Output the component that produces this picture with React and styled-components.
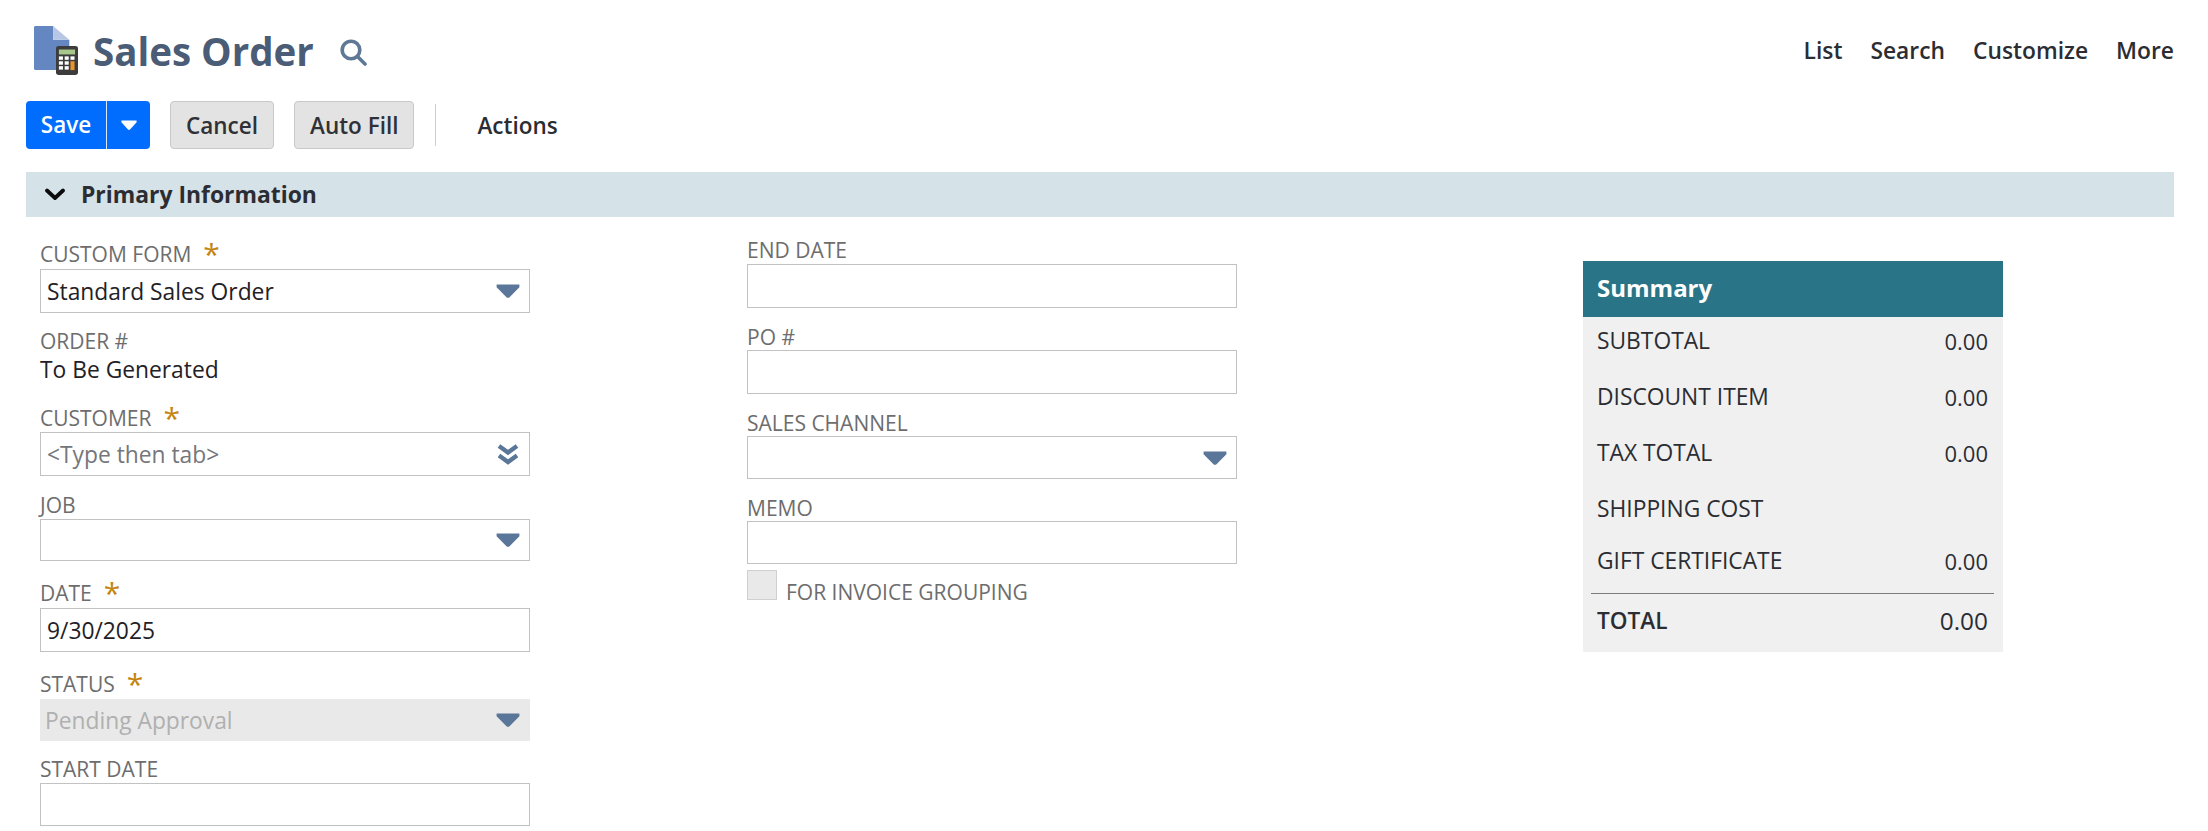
import React from "react";
import styled, { createGlobalStyle } from "styled-components";

const GlobalStyle = createGlobalStyle`
  html, body {
    margin: 0;
    padding: 0;
    background: #fff;
  }
  body {
    font-family: "Open Sans", "Noto Sans", sans-serif;
    color: #1f2126;
  }
`;

const Page = styled.div`
  width: 2208px;
  height: 831px;
  overflow: hidden;
  padding: 0 34px 0 26px;
  box-sizing: border-box;
`;

const TitleRow = styled.div`
  display: flex;
  align-items: center;
  justify-content: space-between;
  height: 101px;
`;

const TitleGroup = styled.div`
  display: flex;
  align-items: center;
  padding: 0 0 0 8px;
  height: 101px;
`;

const Title = styled.h1`
  margin: 0 0 0 15px;
  font-size: 38.5px;
  line-height: 50px;
  font-weight: 700;
  color: #4a5c76;
`;

const SearchButton = styled.span`
  display: flex;
  margin: 4px 0 0 26px;
`;

const TopLinks = styled.nav`
  display: flex;
  gap: 28px;
`;

const TopLink = styled.span`
  font-size: 22.8px;
  line-height: 28px;
  font-weight: 600;
  color: #2b2d33;
`;

const Toolbar = styled.div`
  display: flex;
  align-items: center;
  height: 48px;
`;

const SaveGroup = styled.div`
  display: flex;
  width: 124px;
  height: 48px;
  border-radius: 4px;
  background: #006dff;
  overflow: hidden;
`;

const SaveLabel = styled.span`
  width: 80px;
  text-align: center;
  color: #fff;
  font-size: 22.5px;
  line-height: 48px;
  font-weight: 600;
  border-right: 1px solid #dbe9ff;
`;

const SaveCaret = styled.span`
  flex: 1;
  display: flex;
  align-items: center;
  justify-content: center;
`;

const GreyButton = styled.span`
  height: 48px;
  box-sizing: border-box;
  padding: 0 15px;
  margin-left: 20px;
  display: flex;
  align-items: center;
  background: #e3e3e3;
  border: 1px solid #c9c9c9;
  border-radius: 4px;
  font-size: 22.5px;
  font-weight: 600;
  color: #2f3136;
`;

const Divider = styled.span`
  width: 1px;
  height: 42px;
  margin-left: 21px;
  background: #cfcfcf;
`;

const Actions = styled.span`
  margin-left: 41px;
  font-size: 22.5px;
  font-weight: 600;
  color: #2b2d33;
`;

const SectionBar = styled.div`
  margin-top: 23px;
  height: 45px;
  display: flex;
  align-items: center;
  padding-left: 18px;
  background: #d5e2e8;
`;

const SectionTitle = styled.h2`
  margin: 0 0 0 15px;
  font-size: 22.9px;
  font-weight: 700;
  color: #2b2d33;
`;

const Body = styled.div`
  display: flex;
  align-items: flex-start;
  padding-left: 14px;
`;

const Column = styled.div`
  flex: none;
  width: ${(p) => p.$width}px;
  margin-top: ${(p) => p.$top}px;
  margin-left: ${(p) => p.$left || 0}px;
`;

const Field = styled.div`
  margin-top: ${(p) => p.$top || 0}px;
`;

const Label = styled.div`
  height: 24px;
  margin-bottom: ${(p) => p.$gap || 0}px;
  font-size: 21px;
  line-height: 22px;
  color: #6d6d6d;
  white-space: nowrap;
`;

const Required = styled.span`
  margin-left: 12px;
  font-size: 30px;
  line-height: 22px;
  color: #c4850f;
  vertical-align: -3px;
`;

const Control = styled.div`
  height: ${(p) => p.$height}px;
  box-sizing: border-box;
  display: flex;
  align-items: center;
  justify-content: space-between;
  padding: 0 9px 0 ${(p) => (p.$disabled ? 4 : 6)}px;
  font-size: 22.8px;
  color: ${(p) => (p.$placeholder ? "#75767b" : p.$disabled ? "#b0b0b0" : "#1f2126")};
  background: ${(p) => (p.$disabled ? "#e9e9e9" : "#fff")};
  border: 1px solid ${(p) => (p.$disabled ? "#e9e9e9" : "#c2c2c2")};
`;

const StaticValue = styled.div`
  font-size: 22.8px;
  line-height: 32px;
  color: #1f2126;
`;

const CheckRow = styled.div`
  display: flex;
  align-items: flex-end;
  margin-top: 6px;
`;

const Checkbox = styled.span`
  width: 30px;
  height: 30px;
  box-sizing: border-box;
  background: #e9e9e9;
  border: 1px solid #d0d0d0;
`;

const CheckLabel = styled(Label)`
  margin-left: 9px;
  margin-bottom: -5px;
`;

const Summary = styled.div`
  background: #f0f0f0;
  height: 391px;
`;

const SummaryHeader = styled.div`
  height: 56px;
  box-sizing: border-box;
  display: flex;
  align-items: center;
  padding: 0 0 3px 14px;
  background: #297486;
  color: #fff;
  font-size: 24px;
  font-weight: 700;
`;

const SummaryRow = styled.div`
  height: ${(p) => p.$height}px;
  box-sizing: border-box;
  display: flex;
  justify-content: space-between;
  padding: ${(p) => p.$pad}px 15px 0 14px;
  font-size: 22.8px;
  line-height: 28px;
  color: #2b2d33;
`;

const RowValue = styled.span`
  font-size: ${(p) => (p.$total ? 24.4 : 22)}px;
`;

const TotalLabel = styled.span`
  font-size: 22.6px;
  font-weight: 600;
`;

const SummaryRule = styled.div`
  height: 1px;
  margin: 0 9px 0 8px;
  background: #7b7b7b;
`;

const Caret = ({ color = "#5a7699", width = 24, height = 14 }) => (
  <svg width={width} height={height} viewBox="0 0 20 13" preserveAspectRatio="none">
    <path d="M0.5 0.5h19v2.5l-8 9a2 2 0 0 1-3 0l-8-9z" fill={color} />
  </svg>
);

const DoubleChevron = () => (
  <svg width="24" height="23" viewBox="0 0 24 23" fill="none" stroke="#5a7699" strokeWidth="4.400">
    <path d="M3 3l9 6.500 9-6.500" />
    <path d="M3 12.500l9 6.500 9-6.500" />
  </svg>
);

const SearchIcon = () => (
  <svg width="27" height="27" viewBox="0 0 27 27" fill="none" stroke="#5f7896" strokeWidth="3.600" strokeLinecap="round">
    <circle cx="11" cy="11" r="8.800" />
    <path d="M17.500 17.500l7.500 7.500" />
  </svg>
);

const ChevronDown = () => (
  <svg width="22" height="13" viewBox="0 0 22 13" fill="none" stroke="#0c0c0c" strokeWidth="3.800" strokeLinecap="round" strokeLinejoin="round">
    <path d="M3 2.500l8 7.500 8-7.500" />
  </svg>
);

const RecordIcon = () => (
  <svg width="44" height="49" viewBox="0 0 38 50" preserveAspectRatio="none">
    <path d="M1.500 0h15v14h14v31h-29a1.500 1.500 0 0 1-1.500-1.500v-42a1.500 1.500 0 0 1 1.500-1.500z" fill="#6486c1" />
    <path d="M16.500 0l14 14h-14z" fill="#b6c6e4" />
    <rect x="19" y="20.500" width="19" height="29.500" rx="2.500" fill="#3c3c3c" />
    <rect x="21.500" y="24" width="14" height="5" fill="#a7c88a" />
    <g fill="#fff">
      <rect x="21.500" y="31" width="3.500" height="3.500" />
      <rect x="26.500" y="31" width="3.500" height="3.500" />
      <rect x="21.500" y="36" width="3.500" height="3.500" />
      <rect x="26.500" y="36" width="3.500" height="3.500" />
      <rect x="21.500" y="41" width="3.500" height="3.500" />
      <rect x="26.500" y="41" width="3.500" height="3.500" />
      <rect x="31.500" y="31" width="3.500" height="3.500" />
    </g>
    <rect x="31.500" y="36" width="3.500" height="9" fill="#e8962c" />
  </svg>
);

const leftFields = [
  { label: "CUSTOM FORM", required: true, gap: 2, height: 44, value: "Standard Sales Order", icon: "caret" },
  { label: "CUSTOMER", required: true, top: 21, gap: 1, height: 44, value: "<Type then tab>", placeholder: true, icon: "double" },
  { label: "JOB", top: 18, gap: 1, height: 42, icon: "caret" },
  { label: "DATE", required: true, top: 21, gap: 2, height: 44, value: "9/30/2025" },
  { label: "STATUS", required: true, top: 21, gap: 2, height: 42, value: "Pending Approval", disabled: true, icon: "caret" },
  { label: "START DATE", top: 17, gap: 1, height: 43 },
];

const middleFields = [
  { label: "END DATE", gap: 1, height: 44 },
  { label: "PO #", top: 18, height: 44 },
  { label: "SALES CHANNEL", top: 18, height: 43, icon: "caret" },
  { label: "MEMO", top: 18, height: 43 },
];

const summaryRows = [
  { label: "SUBTOTAL", value: "0.00", height: 56, pad: 10 },
  { label: "DISCOUNT ITEM", value: "0.00", height: 56, pad: 10 },
  { label: "TAX TOTAL", value: "0.00", height: 56, pad: 10 },
  { label: "SHIPPING COST", value: "", height: 56, pad: 10 },
  { label: "GIFT CERTIFICATE", value: "0.00", height: 52, pad: 6 },
];

const FormField = ({ field }) => (
  <Field $top={field.top}>
    <Label $gap={field.gap}>
      {field.label}
      {field.required && <Required>*</Required>}
    </Label>
    <Control $height={field.height} $placeholder={field.placeholder} $disabled={field.disabled}>
      <span>{field.value}</span>
      {field.icon === "caret" && <Caret />}
      {field.icon === "double" && <DoubleChevron />}
    </Control>
  </Field>
);

export default function App() {
  return (
    <Page>
      <GlobalStyle />
      <TitleRow>
        <TitleGroup>
          <RecordIcon />
          <Title>Sales Order</Title>
          <SearchButton>
            <SearchIcon />
          </SearchButton>
        </TitleGroup>
        <TopLinks>
          <TopLink>List</TopLink>
          <TopLink>Search</TopLink>
          <TopLink>Customize</TopLink>
          <TopLink>More</TopLink>
        </TopLinks>
      </TitleRow>

      <Toolbar>
        <SaveGroup>
          <SaveLabel>Save</SaveLabel>
          <SaveCaret>
            <Caret color="#fff" width={16} height={10} />
          </SaveCaret>
        </SaveGroup>
        <GreyButton>Cancel</GreyButton>
        <GreyButton>Auto Fill</GreyButton>
        <Divider />
        <Actions>Actions</Actions>
      </Toolbar>

      <SectionBar>
        <ChevronDown />
        <SectionTitle>Primary Information</SectionTitle>
      </SectionBar>

      <Body>
        <Column $width={490} $top={26}>
          <FormField field={leftFields[0]} />
          <Field $top={17}>
            <Label>ORDER #</Label>
            <StaticValue>To Be Generated</StaticValue>
          </Field>
          {leftFields.slice(1).map((field) => (
            <FormField key={field.label} field={field} />
          ))}
        </Column>

        <Column $width={490} $top={22} $left={217}>
          {middleFields.map((field) => (
            <FormField key={field.label} field={field} />
          ))}
          <CheckRow>
            <Checkbox />
            <CheckLabel>FOR INVOICE GROUPING</CheckLabel>
          </CheckRow>
        </Column>

        <Column $width={420} $top={44} $left={346}>
          <Summary>
            <SummaryHeader>Summary</SummaryHeader>
            {summaryRows.map((row) => (
              <SummaryRow key={row.label} $height={row.height} $pad={row.pad}>
                <span>{row.label}</span>
                <RowValue>{row.value}</RowValue>
              </SummaryRow>
            ))}
            <SummaryRule />
            <SummaryRow $height={57} $pad={13}>
              <TotalLabel>TOTAL</TotalLabel>
              <RowValue $total>0.00</RowValue>
            </SummaryRow>
          </Summary>
        </Column>
      </Body>
    </Page>
  );
}
